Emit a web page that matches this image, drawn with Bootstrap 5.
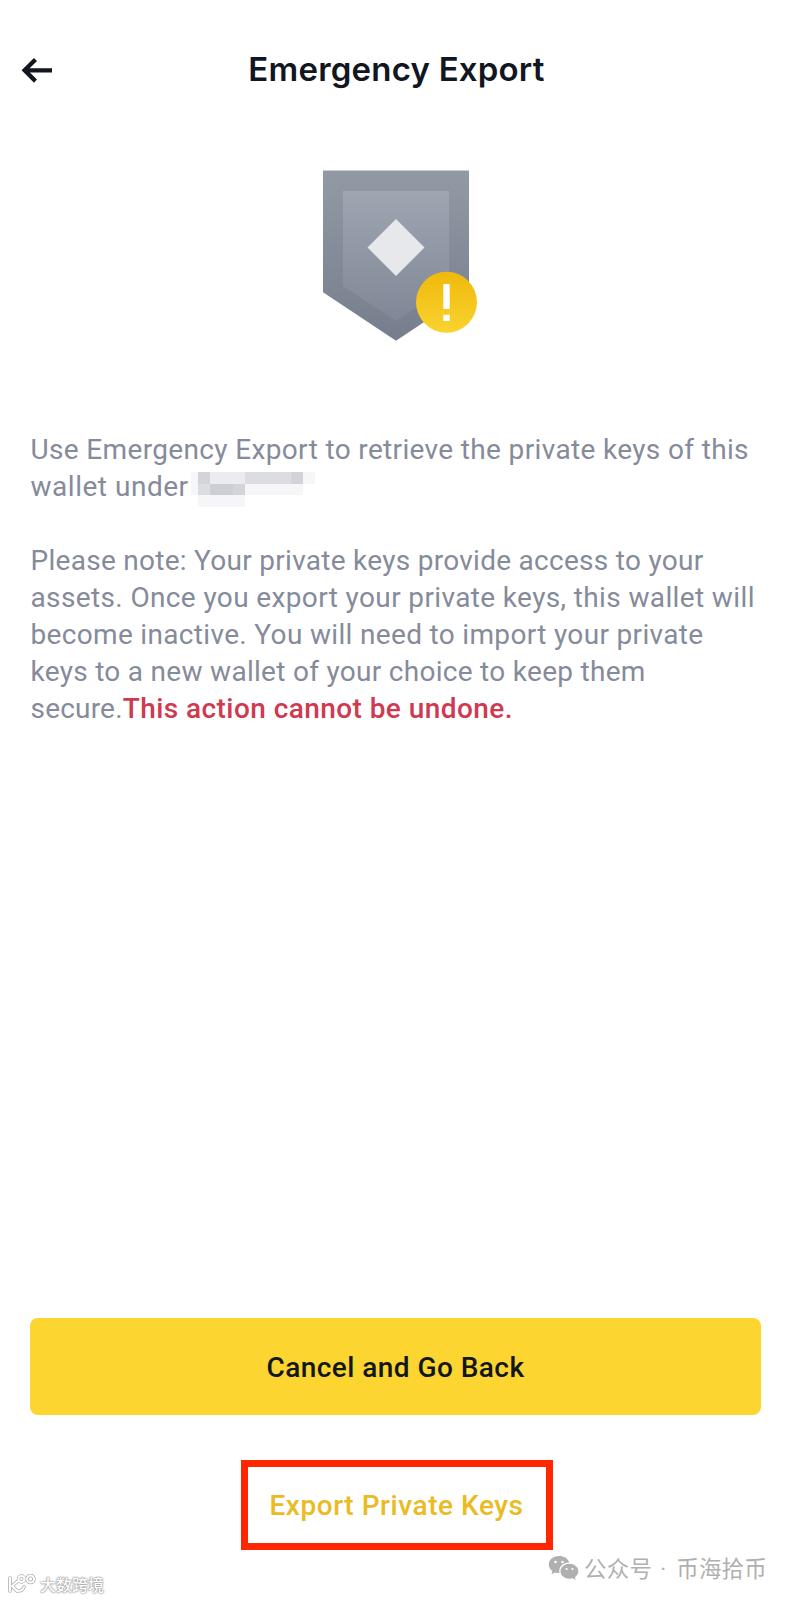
<!DOCTYPE html>
<html lang="en">
<head>
<meta charset="utf-8">
<meta name="viewport" content="width=device-width, initial-scale=1">
<title>Emergency Export</title>
<link href="https://cdn.jsdelivr.net/npm/bootstrap@5.3.0/dist/css/bootstrap.min.css" rel="stylesheet">
<style>
body{font-family:Roboto,"Liberation Sans",sans-serif;color:#12161f;background:#fff;overflow:hidden}
.screen{width:792px;height:1600px}
.topbar{height:140px}
.topbar h1{font:600 33px/40px Inter,sans-serif;letter-spacing:.2px;margin-left:1px;padding-bottom:2px}
.back-btn{left:19.5px;top:54px}
.shield-box{height:291px;padding-top:30px}
.shield-box svg{margin-left:10px}
.copy{font-size:28px;line-height:37px;color:#858b9a;padding:0 29px 0 30.5px}
.copy p{margin-bottom:37px}
.copy span{white-space:nowrap;letter-spacing:.33px}
.copy .l1{letter-spacing:.35px}
.copy .l2{letter-spacing:.52px}
.copy .l3{letter-spacing:.28px}
.copy .l4{letter-spacing:.37px}
.copy .l6{letter-spacing:.29px}
.copy .l7{letter-spacing:.2px}
.copy .warn{color:#cf3a50;font-weight:500;letter-spacing:.43px}
.masked{margin:-10px 0 -10px 2px;vertical-align:-2px}
.actions{padding:0 31px 0 30px;margin-bottom:50px}
.btn-cancel{--bs-btn-bg:#fcd530;--bs-btn-hover-bg:#fcd530;--bs-btn-color:#12161f;--bs-btn-border-width:0;--bs-btn-border-radius:8px;height:97px;padding-top:9px;font-size:28px;font-weight:500;letter-spacing:.44px}
.btn-export{--bs-btn-color:#eabb22;--bs-btn-border-width:7px;--bs-btn-border-color:#ff2600;--bs-btn-border-radius:0;--bs-btn-padding-y:0;--bs-btn-padding-x:0;width:312px;height:90px;margin-top:45px;margin-left:2px;padding-top:2px;font-size:28px;font-weight:500;letter-spacing:.55px}
.account-mark{right:25px;bottom:14.5px;color:#b0b0b0;font:22.5px/34px "Noto Sans CJK SC",sans-serif;letter-spacing:.2px}
.account-mark .dot{display:inline-block;width:24px;text-align:center;padding-right:2px;font-family:Roboto,sans-serif}
.site-mark{left:8px;bottom:4px;color:#fff;font:500 16px/24px "Noto Sans CJK SC",sans-serif;text-shadow:0 0 1px #888,0 0 2px #999,0 0 2px #aaa}
</style>
</head>
<body>
<main class="screen d-flex flex-column position-relative">
  <header class="topbar d-flex justify-content-center align-items-center position-relative">
    <a href="#" class="back-btn position-absolute d-block lh-1" aria-label="Back">
      <svg width="34" height="32" viewBox="0 0 34 32" fill="none" stroke="#12161f" stroke-width="4.300"><path d="M32 16.300H5M15.500 5.500L4.600 16.300L15.500 27.100"/></svg>
    </a>
    <h1 class="mb-0">Emergency Export</h1>
  </header>

  <div class="shield-box text-center">
    <svg width="166" height="172" viewBox="0 0 166 172">
      <defs>
        <linearGradient id="outer" x2="0" y2="1"><stop stop-color="#929aa5"/><stop offset="1" stop-color="#767d8c"/></linearGradient>
        <linearGradient id="inner" x2="0" y2="1"><stop stop-color="#9ea6b2"/><stop offset="1" stop-color="#808796"/></linearGradient>
        <linearGradient id="gold" x2="0" y2="1"><stop stop-color="#f0b90b"/><stop offset="1" stop-color="#f9d330"/></linearGradient>
      </defs>
      <path fill="url(#outer)" d="M5 .5h146v121.800l-73 48.500l-73-48.500z"/>
      <path fill="url(#inner)" d="M25 21h106v95l-53 35l-53-35z"/>
      <path fill="#e6e8ec" d="M78 49l28.500 28.500L78 106L49.500 77.500z"/>
      <circle cx="128.500" cy="132.200" r="30.500" fill="url(#gold)"/>
      <path fill="#fff" d="M125.300 114h6.400v25h-6.400zM125.300 144.700h6.400v6.300h-6.400z"/>
    </svg>
  </div>

  <section class="copy">
    <p><span class="l1">Use Emergency Export to retrieve the private keys of this</span><br>
    <span class="l2">wallet under</span><svg class="masked" width="124" height="38" viewBox="191 471 124 38" shape-rendering="crispEdges" role="img" aria-label="Hidden account">
      <path fill="#f6f6f8" d="M191 473h7v23h-7zM303 473h12v12h-12zM198 496h47v12h-47zM245 485h58v11h-58z"/>
      <path fill="#d3d4da" d="M198 473h12v12h-12zM291 473h12v12h-12zM233 485h12v11h-12z"/>
      <path fill="#ececf0" d="M210 473h35v12h-35z"/>
      <path fill="#dcdde1" d="M245 473h46v12h-46zM198 485h12v11h-12z"/>
      <path fill="#cccdd5" d="M210 485h23v11h-23z"/>
    </svg></p>
    <p><span class="l3">Please note: Your private keys provide access to your</span><br>
    <span class="l4">assets. Once you export your private keys, this wallet will</span><br>
    <span>become inactive. You will need to import your private</span><br>
    <span class="l6">keys to a new wallet of your choice to keep them</span><br>
    <span class="l7">secure.</span><span class="warn">This action cannot be undone.</span></p>
  </section>

  <div class="actions mt-auto d-flex flex-column align-items-center">
    <button class="btn btn-cancel w-100">Cancel and Go Back</button>
    <button class="btn btn-export">Export Private Keys</button>
  </div>

  <div class="account-mark position-absolute d-flex align-items-center">
    <svg class="me-1" width="32" height="26" viewBox="0 0 32 26">
      <path fill="#b0b0b0" d="M11 1C5 1 .8 4.800.8 9.600c0 2.700 1.400 5 3.600 6.600l-.9 3l3.500-1.800c1.300.4 2.700.6 4.400.5C10.300 12 15 7.400 21.300 7.500C20.200 3.700 16 1 11 1z"/>
      <path fill="#b0b0b0" d="M21.500 8.700c-5 0-9 3.300-9 7.600s4 7.500 9 7.500c1.100 0 2.200-.2 3.200-.5l3 1.600l-.8-2.700c2.100-1.300 3.500-3.500 3.500-5.900c0-4.300-4-7.600-8.900-7.600z"/>
      <g fill="#fff"><circle cx="7.500" cy="7" r="1.300"/><circle cx="14.500" cy="7" r="1.300"/><circle cx="18.600" cy="14" r="1.100"/><circle cx="24.500" cy="14" r="1.100"/></g>
    </svg>
    <span>公众号<span class="dot">·</span>币海拾币</span>
  </div>

  <div class="site-mark position-absolute d-flex align-items-center">
    <svg class="me-1" width="28" height="20" viewBox="0 0 28 20" fill="none" stroke-linecap="round">
      <g stroke="#aaa" stroke-width="3.500"><path d="M2 4v13M10 7L4 12l5 5M8 16c4 2 7 0 8-3"/><circle cx="13.500" cy="5" r="3"/><circle cx="22.500" cy="5" r="3.500"/></g>
      <g stroke="#fff" stroke-width="2"><path d="M2 4v13M10 7L4 12l5 5M8 16c4 2 7 0 8-3"/><circle cx="13.500" cy="5" r="3"/><circle cx="22.500" cy="5" r="3.500"/></g>
    </svg>
    <span>大数跨境</span>
  </div>
</main>
<script src="https://cdn.jsdelivr.net/npm/bootstrap@5.3.0/dist/js/bootstrap.bundle.min.js"></script>
</body>
</html>
